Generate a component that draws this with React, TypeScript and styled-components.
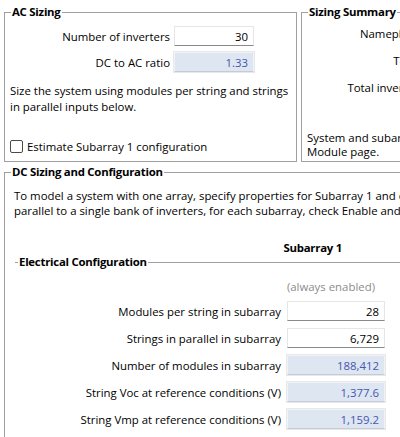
import { createGlobalStyle } from 'styled-components';
import styled from 'styled-components';

const GlobalStyle = createGlobalStyle`
  html, body {
    margin: 0;
    padding: 0;
    background: #ffffff;
    overflow: hidden;
  }
  body {
    font-family: 'Open Sans', 'Noto Sans', sans-serif;
    font-size: 11.4px;
    color: #000000;
  }
`;

type Field = { label: string; value: string; readOnly?: boolean };

const acFields: Field[] = [
  { label: 'Number of inverters', value: '30' },
  { label: 'DC to AC ratio', value: '1.33', readOnly: true },
];

const summaryLabels = ['Nameplate DC capacity', 'Total AC capacity', 'Total inverter DC capacity'];

const electricalFields: Field[] = [
  { label: 'Modules per string in subarray', value: '28' },
  { label: 'Strings in parallel in subarray', value: '6,729' },
  { label: 'Number of modules in subarray', value: '188,412', readOnly: true },
  { label: 'String Voc at reference conditions (V)', value: '1,377.6', readOnly: true },
  { label: 'String Vmp at reference conditions (V)', value: '1,159.2', readOnly: true },
];

export default function App() {
  return (
    <>
      <GlobalStyle />
      <Window>
        <TopRow>
          <GroupBox $width={293} $height={158}>
            <Legend>AC Sizing</Legend>
            <AcFields>
              {acFields.map(({ label, value, readOnly }) => (
                <AcRow key={label}>
                  <Label>{label}</Label>
                  <NumberBox $readOnly={readOnly} $width={80}>
                    {value}
                  </NumberBox>
                </AcRow>
              ))}
            </AcFields>
            <Note>
              Size the system using modules per string and strings
              <br />
              in parallel inputs below.
            </Note>
            <CheckRow>
              <CheckBox />
              Estimate Subarray 1 configuration
            </CheckRow>
          </GroupBox>
          <GroupBox $width={300} $height={158}>
            <Legend>Sizing Summary</Legend>
            <SummaryList>
              {summaryLabels.map((label) => (
                <SummaryRow key={label}>{label}</SummaryRow>
              ))}
            </SummaryList>
            <SummaryNote>
              System and subarray sizes are calculated from values on the
              <br />
              Module page.
            </SummaryNote>
          </GroupBox>
        </TopRow>
        <GroupBox $width={700} $height={300}>
          <Legend>DC Sizing and Configuration</Legend>
          <Intro>
            To model a system with one array, specify properties for Subarray 1 and disable Subarrays 2-4. To model
            <br />
            parallel to a single bank of inverters, for each subarray, check Enable and specify the number of strings
          </Intro>
          <SubarrayHeader>Subarray 1</SubarrayHeader>
          <Section>
            <SectionLegend>Electrical Configuration</SectionLegend>
            <Enabled>(always enabled)</Enabled>
            <ElectricalGrid>
              {electricalFields.map(({ label, value, readOnly }) => (
                <ElectricalRow key={label}>
                  <Label>{label}</Label>
                  <NumberBox $readOnly={readOnly} $width={98}>
                    {value}
                  </NumberBox>
                </ElectricalRow>
              ))}
            </ElectricalGrid>
          </Section>
        </GroupBox>
      </Window>
    </>
  );
}

const Window = styled.div`
  width: 800px;
  padding: 4px 0 0 4px;
  display: flex;
  flex-direction: column;
  gap: 2px;
`;

const TopRow = styled.div`
  display: flex;
  gap: 4px;
`;

const GroupBox = styled.fieldset<{ $width: number; $height: number }>`
  box-sizing: border-box;
  width: ${({ $width }) => $width}px;
  height: ${({ $height }) => $height}px;
  margin: 0;
  padding: 0 5px;
  border: 1px solid #a0a0a0;
  min-width: 0;
`;

const Legend = styled.legend`
  margin-left: 1px;
  padding: 0 1px;
  font-weight: 700;
  font-size: 11.4px;
  line-height: 16px;
  letter-spacing: -0.25px;
`;

const AcFields = styled.div`
  display: flex;
  flex-direction: column;
  gap: 6px;
  margin-top: 6px;
`;

const AcRow = styled.div`
  display: flex;
  justify-content: flex-end;
  align-items: center;
  gap: 4px;
  padding-right: 37px;
`;

const Label = styled.span`
  white-space: nowrap;
`;

const NumberBox = styled.div<{ $readOnly?: boolean; $width: number }>`
  box-sizing: border-box;
  width: ${({ $width }) => $width}px;
  height: 20px;
  padding: 0 5px;
  display: flex;
  align-items: center;
  justify-content: flex-end;
  background: ${({ $readOnly }) => ($readOnly ? '#dde6f1' : '#ffffff')};
  color: ${({ $readOnly }) => ($readOnly ? '#4657b0' : '#000000')};
  border: 1px solid ${({ $readOnly }) => ($readOnly ? '#f0f3f7' : '#e6e6e6')};
  border-bottom-color: ${({ $readOnly }) => ($readOnly ? '#c4ccd6' : '#8a8a8a')};
  box-shadow: 0 0 0 1px ${({ $readOnly }) => ($readOnly ? '#e8e8e8' : 'transparent')};
`;

const Note = styled.div`
  margin-top: 11px;
  line-height: 16px;
  white-space: nowrap;
`;

const CheckRow = styled.label`
  display: flex;
  align-items: center;
  gap: 4px;
  margin-top: 24px;
  white-space: nowrap;
`;

const CheckBox = styled.span`
  box-sizing: border-box;
  width: 13px;
  height: 13px;
  border: 1px solid #4a4a4a;
  border-radius: 2px;
  background: #ffffff;
`;

const SummaryList = styled.div`
  display: flex;
  flex-direction: column;
  gap: 11px;
  margin-top: 6px;
  width: 176px;
`;

const SummaryRow = styled.div`
  text-align: right;
  white-space: nowrap;
  line-height: 16px;
`;

const SummaryNote = styled.div`
  margin-top: 35px;
  line-height: 14px;
  white-space: nowrap;
`;

const Intro = styled.div`
  margin-top: 8px;
  padding-left: 4px;
  line-height: 15px;
  white-space: nowrap;
`;

const SubarrayHeader = styled.div`
  width: 332px;
  margin-top: 23px;
  text-align: right;
  font-weight: 700;
  font-size: 11.4px;
  letter-spacing: -0.25px;
  line-height: 14px;
`;

const Section = styled.fieldset`
  margin: -1px 0 0 5px;
  padding: 0;
  border: none;
  border-top: 1px solid #a0a0a0;
  min-width: 0;
`;

const SectionLegend = styled.legend`
  margin-left: 3px;
  padding: 0 1px;
  font-weight: 700;
  font-size: 11.4px;
  letter-spacing: -0.25px;
  line-height: 16px;
`;

const Enabled = styled.div`
  width: 360px;
  margin-top: 9px;
  text-align: right;
  color: #8c8c8c;
  line-height: 16px;
`;

const ElectricalGrid = styled.div`
  display: flex;
  flex-direction: column;
  gap: 7px;
  margin-top: 6px;
  width: 370px;
`;

const ElectricalRow = styled.div`
  display: flex;
  justify-content: flex-end;
  align-items: center;
  gap: 6px;
`;
